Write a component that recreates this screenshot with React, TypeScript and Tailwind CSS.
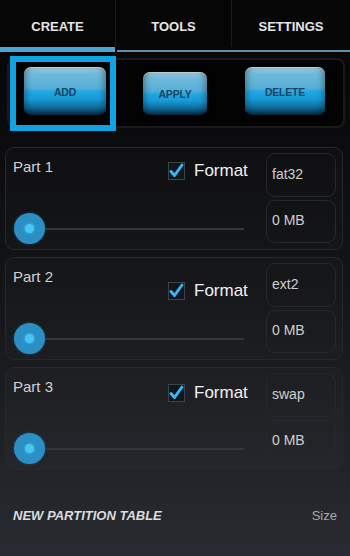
import React from "react";

const font = "font-['Liberation_Sans',Arial,sans-serif]";

function Btn({ label, w, h }: { label: string; w: string; h: string }) {
  return (
    <div
      className={`${w} ${h} rounded-[7px] flex items-center justify-center bg-[linear-gradient(to_bottom,#a3cddd_0%,#70badb_14%,#56aed6_44%,#1ea7e2_52%,#199cd8_66%,#0f6c9c_84%,#072a40_100%)] shadow-[0_2px_5px_rgba(0,0,0,0.9),inset_0_1px_0_rgba(255,255,255,0.35),inset_5px_0_6px_-3px_rgba(0,0,0,0.35),inset_-5px_0_6px_-3px_rgba(0,0,0,0.35)]`}
    >
      <span className="text-[10.5px] font-bold text-[#1a4464] tracking-[-0.2px] mt-[3px]">{label}</span>
    </div>
  );
}

function Check() {
  return (
    <svg width="17" height="18" viewBox="0 0 17 18" className="overflow-visible">
      <rect x="0.5" y="0.5" width="16" height="17" fill="#0f161c" stroke="#3b434b" strokeWidth="1" />
      <path d="M3 9.5 L6.5 13.5 L14 3" fill="none" stroke="#3cb4ec" strokeWidth="3" strokeLinecap="round" strokeLinejoin="round" />
    </svg>
  );
}

function Part({ name, fs, checkMt }: { name: string; fs: string; checkMt: string }) {
  return (
    <div className="h-[103px] w-[338px] rounded-[9px] border border-[#26282d] bg-white/[0.015] flex">
      <div className="flex-1 flex flex-col pl-[7px] pt-[10px]">
        <div className="h-[17px] flex items-start">
          <div className="w-[155px] text-[15px] leading-[17px] text-[#d2d2d2]">{name}</div>
          <div className={`flex items-center ${checkMt}`}>
            <Check />
            <span className="ml-[9px] text-[17px] leading-[20px] text-[#f2f2f2]">Format</span>
          </div>
        </div>
        <div className="mt-[38px] ml-[1px] w-[230px] h-[31px] flex items-center">
          <div className="w-[31px] h-[31px] rounded-full bg-[#2b8fc3] flex items-center justify-center shadow-[0_0_3px_rgba(40,140,200,0.4)]">
            <div className="w-[9px] h-[9px] rounded-full bg-[#47c6f5] shadow-[0_0_3px_#47c6f5]" />
          </div>
          <div className="flex-1 h-[2px] bg-[#34363b]" />
        </div>
      </div>
      <div className="w-[70px] mr-[6px] mt-[5px] flex flex-col gap-[3px]">
        <div className="h-[44px] rounded-[9px] border border-[#26282d] pl-[5px] pt-[12px] text-[14px] leading-[16px] text-[#cfcfcf]">
          {fs}
        </div>
        <div className="h-[43px] rounded-[9px] border border-[#26282d] pl-[5px] pt-[11px] text-[14px] leading-[16px] text-[#cfcfcf]">
          0 MB
        </div>
      </div>
    </div>
  );
}

export default function App() {
  return (
    <div
      className={`relative w-[350px] h-[556px] overflow-hidden bg-linear-to-b from-[#050506] via-[#131416] via-50% to-[#282b31] ${font}`}
    >
      <div className="flex h-[47px] bg-[#060606]">
        <div className="w-[116px] border-r border-[#1b1b1b] flex items-center justify-center pt-[6px] text-[13px] font-bold text-[#e6e6e6]">
          CREATE
        </div>
        <div className="w-[116px] border-r border-[#1b1b1b] flex items-center justify-center pt-[6px] text-[13px] font-bold text-[#e6e6e6]">
          TOOLS
        </div>
        <div className="flex-1 flex items-center justify-center pt-[6px] text-[13px] font-bold text-[#e6e6e6]">
          SETTINGS
        </div>
      </div>
      <div className="flex items-end h-[5px] bg-[#060606]">
        <div className="w-[115px] h-[5px] bg-[#4aa6d4]" />
        <div className="w-[2px]" />
        <div className="flex-1 h-[2px] bg-[#5b8db0]" />
      </div>

      <div className="mt-[6px] ml-[7px] w-[338px] h-[70px] rounded-[8px] border-2 border-[#191a1b] bg-[#030303] flex items-end pb-[11px] pl-[15px]">
        <Btn label="ADD" w="w-[82px]" h="h-[48px]" />
        <div className="ml-[37px]">
          <Btn label="APPLY" w="w-[64px]" h="h-[43px]" />
        </div>
        <div className="ml-[38px]">
          <Btn label="DELETE" w="w-[80px]" h="h-[48px]" />
        </div>
      </div>

      <div className="absolute left-[10px] top-[56px] w-[106px] h-[75px] border-[6px] border-[#0fa3e3]" />

      <div className="mt-[19px] ml-[5px] flex flex-col gap-[7px]">
        <Part name="Part 1" fs="fat32" checkMt="mt-[3px]" />
        <Part name="Part 2" fs="ext2" checkMt="mt-[13px]" />
        <Part name="Part 3" fs="swap" checkMt="mt-[5px]" />
      </div>

      <div className="mt-[38px] px-[13px] flex justify-between items-center">
        <span className="text-[13px] leading-[15px] font-bold italic text-[#dcdcdc]">NEW PARTITION TABLE</span>
        <span className="text-[13px] leading-[15px] text-[#a9a9a9]">Size</span>
      </div>
    </div>
  );
}
